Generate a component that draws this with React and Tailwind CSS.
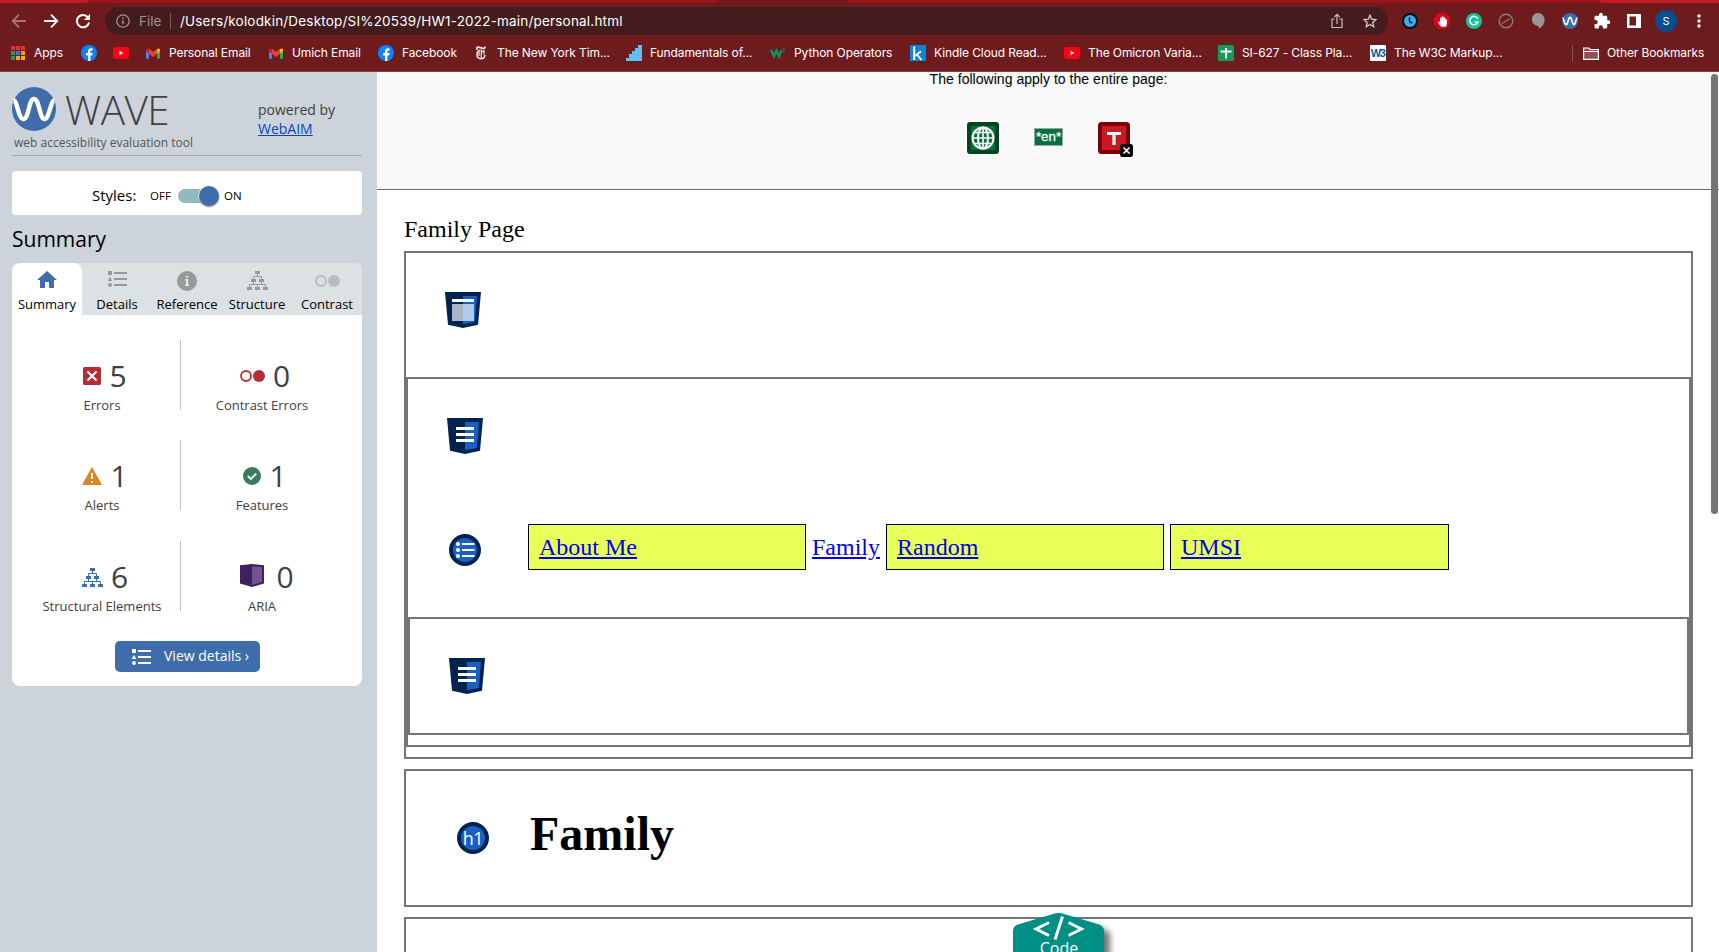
import React from "react";
import { FaHandPaper } from "react-icons/fa";
import { MdExtension } from "react-icons/md";

const ui = "font-['Inter','Liberation_Sans',sans-serif]";

function Gmail() {
  return (
    <svg className="w-[14px] h-[11px]" viewBox="0 0 14 11">
      <path d="M0 1.8V10q0 .8.8.8H3V4z" fill="#4285f4" />
      <path d="M14 1.8V10q0 .8-.8.8H11V4z" fill="#34a853" />
      <path d="M11 1l2-.6q1 .3 1 1.4v1.4L11 5.8z" fill="#fbbc04" />
      <path d="M3 1L1 .4Q0 .7 0 1.8v1.4l3 2.6z" fill="#c5221f" />
      <path d="M3 .8l4 3.3L11 .8v5L7 9 3 5.8z" fill="#ea4335" />
    </svg>
  );
}
function Facebook() {
  return (
    <svg className="w-4 h-4" viewBox="0 0 16 16">
      <circle cx="8" cy="8" r="8" fill="#0a84f8" />
      <path d="M7 16v-5.600H5V8h2V6.500C7 4.400 8.200 3.300 10 3.300l1.600.2v2h-1c-.9 0-1.200.5-1.200 1.200V8h2.200l-.4 2.400H9.400V16z" fill="#fff" />
    </svg>
  );
}
function Youtube() {
  return (
    <svg className="w-4 h-3" viewBox="0 0 16 12">
      <rect width="16" height="12" rx="3" fill="#ff0014" />
      <path d="M6.500 3.700v4.600L10.400 6z" fill="#fff" />
    </svg>
  );
}
function AppsGrid() {
  const colors = ["#f4282d", "#f4282d", "#f4282d", "#1f9a57", "#2a7df0", "#f7981d", "#1f9a57", "#f7a81d", "#f7a81d"];
  return (
    <svg className="w-[14px] h-[14px]" viewBox="0 0 14 14">
      {colors.map((c, i) => (
        <rect key={i} x={(i % 3) * 5} y={Math.floor(i / 3) * 5} width="4" height="4" fill={c} />
      ))}
    </svg>
  );
}
function Steps() {
  return (
    <svg className="w-4 h-4" viewBox="0 0 16 16">
      <path d="M0 16v-3h3v-4h3V6h3V3h3V0h4v16z" fill="#5bc2f2" />
    </svg>
  );
}
function Schools() {
  return (
    <svg className="w-[17px] h-3" viewBox="0 0 17 12">
      <path d="M1 2.500L4.200 9.500 7 3.500 9.600 9.500 12 3" fill="none" stroke="#0c9462" strokeWidth="2.600" />
      <path d="M13 1h2.500L14.300 2.400q1.500.3.800 1.600-.6.800-1.900.3" fill="none" stroke="#0c9462" strokeWidth=".8" />
    </svg>
  );
}
function Kindle() {
  return (
    <svg className="w-4 h-4" viewBox="0 0 16 16">
      <rect width="16" height="16" fill="#0b84dd" />
      <path d="M4.200 1.500V15M11 6.300L5 11M7 9.500L11.500 15" stroke="#fff" strokeWidth="1.900" fill="none" />
    </svg>
  );
}
function Sheet() {
  return (
    <svg className="w-4 h-4" viewBox="0 0 16 16">
      <rect width="16" height="16" rx="1.500" fill="#0f9d58" />
      <path d="M8 3v10.500M2.500 6.500h11" stroke="#fff" strokeWidth="2" />
    </svg>
  );
}
function Nyt() {
  return (
    <svg className="w-[10px] h-[14px]" viewBox="0 0 10 14" fill="none" stroke="#f4e8e8">
      <path d="M1.300 3.800Q-.2 1 2.500 1.200L7 2.300Q9 2.600 9 .6" strokeWidth="1.700" />
      <path d="M4.300 4.300Q1 5 1 8.500q0 4 4 4.300 3.500 0 4-4" strokeWidth="1.500" />
      <path d="M5.300 3.500v8.500M3 5.500v4.500M5.500 6.300l3-2M8 4.500v4" strokeWidth="1.200" />
    </svg>
  );
}
function W3() {
  return (
    <span className="flex justify-center w-4 h-4 pr-[1px] bg-white rounded-[1px] text-[#0a5a9c] font-['Liberation_Sans_Narrow','Liberation_Sans',sans-serif] font-bold text-[11px] leading-[17px] tracking-[-1.500px]">
      W3
    </span>
  );
}

const bookmarks = [
  { w: "w-[70px]", icon: <AppsGrid />, text: "Apps" },
  { w: "w-[32px]", icon: <Facebook /> },
  { w: "w-[32px]", icon: <Youtube /> },
  { w: "w-[123px]", icon: <Gmail />, text: "Personal Email" },
  { w: "w-[110px]", icon: <Gmail />, text: "Umich Email" },
  { w: "w-[95px]", icon: <Facebook />, text: "Facebook" },
  { w: "w-[153px]", icon: <Nyt />, text: "The New York Tim..." },
  { w: "w-[144px]", icon: <Steps />, text: "Fundamentals of..." },
  { w: "w-[140px]", icon: <Schools />, text: "Python Operators" },
  { w: "w-[154px]", icon: <Kindle />, text: "Kindle Cloud Read..." },
  { w: "w-[154px]", icon: <Youtube />, text: "The Omicron Varia..." },
  { w: "w-[152px]", icon: <Sheet />, text: "SI-627 - Class Pla..." },
  { w: "w-[150px]", icon: <W3 />, text: "The W3C Markup..." },
];

function Browser() {
  return (
    <header className={`${ui} h-[72px] bg-[#6e1b1e] border-b border-[#8c3c3d] text-white`}>
      <div className="flex h-[3px]">
        <div className="w-[718px] bg-[#9b141b] rounded-br-[4px]">
          <div className="w-[88px] h-[3px] bg-[#c41c23] rounded-br-[4px]" />
        </div>
        <div className="w-[130px]" />
        <div className="flex-1 flex justify-end bg-[#9b141b] rounded-bl-[4px]">
          <div className="w-[119px] bg-[#c41c23] rounded-bl-[4px]" />
        </div>
      </div>
      <div className="flex items-center h-9">
        <svg className="w-[105px] h-9 shrink-0" viewBox="0 3 105 36" fill="none" strokeWidth="1.800">
          <path d="M26 21H13M19 14.700L12.700 21l6.300 6.300" stroke="#a87577" />
          <path d="M44 21h13M51 14.700l6.300 6.300-6.300 6.300" stroke="#fff" />
          <path d="M88.200 17.600a6.200 6.200 0 1 0 .9 5" stroke="#fff" strokeWidth="2" />
          <path d="M90 14v6h-6z" fill="#fff" />
        </svg>
        <div className="flex items-center w-[1283px] h-7 rounded-full bg-[#441c1e] text-[13.500px]">
          <svg className="ml-[11px] w-[14px] h-[14px]" viewBox="0 0 14 14">
            <circle cx="7" cy="7" r="6.200" fill="none" stroke="#a29293" strokeWidth="1.300" />
            <path d="M7 6.200v4M7 3.500v1.500" stroke="#a29293" strokeWidth="1.500" />
          </svg>
          <span className="ml-[9px] w-[31px] text-[#a29293]">File</span>
          <span className="w-px h-4 bg-[#7c5d5e]" />
          <span className="ml-[9px] flex-1 whitespace-nowrap text-[13.500px] tracking-[0.190px]">/Users/kolodkin/Desktop/SI%20539/HW1-2022-main/personal.html</span>
          <svg className="w-3 h-4 mr-[20px]" viewBox="0 0 12 16" fill="none" stroke="#c9bbbb" strokeWidth="1.200">
            <path d="M3.500 6H1v8.500h10V6H8.500M6 11V1.500M3.300 4L6 1.300 8.700 4" />
          </svg>
          <svg className="w-[14px] h-[14px] mr-[11px]" viewBox="0 0 14 14" fill="none" stroke="#d6caca" strokeWidth="1.300">
            <path d="M7 1.200l1.700 4 4.300.4-3.200 2.900.9 4.200L7 10.500l-3.700 2.200.9-4.200L1 5.600l4.300-.4z" />
          </svg>
        </div>
        <div className="flex items-center ml-[14px] gap-[16px]">
          <svg className="w-4 h-4" viewBox="0 0 16 16">
            <circle cx="8" cy="8" r="8" fill="#0b0f14" />
            <circle cx="8" cy="8" r="6" fill="#35aef0" />
            <path d="M7.500 4.500v4l2.800 1.700" stroke="#0b0f14" strokeWidth="1.500" fill="none" />
          </svg>
          <span className="flex items-center justify-center w-4 h-4 bg-[#e2001a] [clip-path:polygon(30%_0,70%_0,100%_30%,100%_70%,70%_100%,30%_100%,0_70%,0_30%)]">
            <FaHandPaper className="w-[9px] h-[11px]" />
          </span>
          <svg className="w-4 h-4" viewBox="0 0 16 16">
            <circle cx="8" cy="8" r="8" fill="#15c39a" />
            <path d="M11.800 5.700A4.200 4.200 0 1 0 12 9H8.600" fill="none" stroke="#fff" strokeWidth="1.500" />
          </svg>
          <svg className="w-4 h-4" viewBox="0 0 16 16" fill="none" stroke="#8b7878" strokeWidth="1.400">
            <circle cx="8" cy="8" r="6.800" />
            <path d="M4 10.500l8-5" />
          </svg>
          <svg className="w-4 h-4" viewBox="0 0 16 16">
            <path d="M8 0a6.600 6.600 0 0 1 6.600 6.600c0 4.400-2.600 7.600-6 9.200V13A6.500 6.500 0 1 1 8 0z" fill="#979797" />
          </svg>
          <WaveLogo className="w-4 h-4" />
          <MdExtension className="w-[18px] h-[18px] -mx-px" />
          <svg className="w-[14px] h-[14px] mx-px" viewBox="0 0 14 14">
            <path fillRule="evenodd" d="M0 0h14v14H0zM2.500 2.500v9H9v-9z" fill="#fff" />
          </svg>
          <span className="w-[22px] h-[22px] -ml-[3px] rounded-full bg-[#044e91] text-center text-[11px] leading-[22px]">S</span>
        </div>
        <svg className="w-1 h-[14px] ml-5" viewBox="0 0 4 14" fill="#fff">
          <circle cx="2" cy="2" r="1.700" />
          <circle cx="2" cy="7" r="1.700" />
          <circle cx="2" cy="12" r="1.700" />
        </svg>
      </div>
      <nav className="flex items-center h-7 pl-[11px] text-[12px] tracking-[-0.1px] whitespace-nowrap">
        {bookmarks.map((b, i) => (
          <div key={i} className={`${b.w} flex items-center shrink-0 gap-2`}>
            <span className={i === 0 ? "flex w-4 -ml-px pl-px" : "flex w-4 justify-center"}>{b.icon}</span>
            {b.text && <span>{b.text}</span>}
          </div>
        ))}
        <span className="w-px h-4 ml-[52px] bg-[#915253]" />
        <svg className="ml-[10px] w-4 h-[13px]" viewBox="0 0 16 13">
          <path d="M.6 11.500V1h5.200l1.500 1.500h8.100v9.900H.6zM.6 4.500h14.800" fill="#8d5153" stroke="#fff" strokeWidth="1.200" />
        </svg>
        <span className="ml-2">Other Bookmarks</span>
      </nav>
    </header>
  );
}

function WaveLogo({ className }) {
  return (
    <svg className={className} viewBox="0 0 44 44">
      <circle cx="22" cy="22" r="22" fill="#3f6caa" />
      <path d="M1.500 13.500C5.500 13 6 32 11.500 32S16.500 12 22 12s5.500 20 10.500 20S38.500 13 42.500 13.500" fill="none" stroke="#fff" strokeWidth="4.400" />
    </svg>
  );
}

function ListIcon({ className }) {
  return (
    <svg className={className} viewBox="0 0 19 16" fill="currentColor">
      <path d="M0 0h4v4H0zM2 5.700l2.200 4.200H-.2z" />
      <circle cx="2" cy="14" r="1.900" />
      <path d="M6 1h13v2H6zM6 7h13v2H6zM6 13h13v2H6z" />
    </svg>
  );
}
function TreeIcon({ className }) {
  return (
    <svg className={className} viewBox="0 0 21 19">
      <path d="M10.500 2v4M6.500 9V5.500h8V9M2.500 17v-3.500h16V17M6.500 9v4.500M14.500 9v4.500M10.500 13.500V17" fill="none" stroke="currentColor" />
      <path d="M8 0h5v3H8zM4 8h5v3H4zM12 8h5v3h-5zM0 16h5v3H0zM8 16h5v3H8zM16 16h5v3h-5z" fill="currentColor" />
    </svg>
  );
}
function Dots({ className }) {
  return (
    <svg className={className} viewBox="0 0 25 12">
      <circle cx="6" cy="6" r="5" fill="none" stroke="currentColor" strokeWidth="1.800" />
      <circle cx="19" cy="6" r="6" fill="currentColor" />
    </svg>
  );
}

const tabs = [
  {
    label: "Summary",
    icon: (
      <svg className="w-5 h-[17px] mb-[2px] text-[#3f6caa]" viewBox="0 0 20 17" fill="currentColor">
        <path d="M10 0L20 9h-3v8h-5v-6H8v6H3V9H0z" />
      </svg>
    ),
  },
  { label: "Details", icon: <ListIcon className="w-[19px] h-4 text-[#97999b] mb-[3px]" /> },
  {
    label: "Reference",
    icon: (
      <svg className="w-5 h-5" viewBox="0 0 20 20">
        <circle cx="10" cy="10" r="10" fill="#97999b" />
        <path d="M8 8h3.200v5.500h.8V15H8v-1.500h1v-4H8zM9 4.700h2.200v2H9z" fill="#e4e8ea" />
      </svg>
    ),
  },
  { label: "Structure", icon: <TreeIcon className="w-[21px] h-[19px] text-[#97999b]" /> },
  { label: "Contrast", icon: <Dots className="w-[25px] h-3 text-[#b8bcbe]" /> },
];

const stats = [
  {
    n: 5,
    label: "Errors",
    icon: (
      <svg className="w-[18px] h-[18px] mr-2" viewBox="0 0 18 18">
        <rect width="18" height="18" rx="1.500" fill="#b52e35" />
        <path d="M4.500 4.500l9 9M13.500 4.500l-9 9" stroke="#fff" strokeWidth="2" />
      </svg>
    ),
  },
  { n: 0, label: "Contrast Errors", icon: <Dots className="w-[25px] h-3 mr-2 text-[#b52e35]" /> },
  {
    n: 1,
    label: "Alerts",
    icon: (
      <svg className="w-5 h-[18px] mr-2" viewBox="0 0 20 18">
        <path d="M10 0l10 18H0z" fill="#e08327" />
        <path d="M10 6v6M10 14v2" stroke="#fff" strokeWidth="2" />
      </svg>
    ),
  },
  {
    n: 1,
    label: "Features",
    icon: (
      <svg className="w-[18px] h-[18px] mr-2" viewBox="0 0 18 18">
        <circle cx="9" cy="9" r="9" fill="#3a7c5e" />
        <path d="M4.800 9l3 2.900 5.500-5.300" stroke="#fff" strokeWidth="1.800" fill="none" />
      </svg>
    ),
  },
  { n: 6, label: "Structural Elements", icon: <TreeIcon className="w-[21px] h-[19px] mr-2" /> },
  {
    n: 0,
    label: "ARIA",
    icon: (
      <svg className="w-6 h-[23px] mr-3 mb-[3px]" viewBox="0 0 24 23">
        <path d="M0 1.300L12 0l12 1.300V19.500L12 23 0 19.500z" fill="#3f2060" />
        <path d="M12 2.400l10 .7V18l-10 3z" fill="#75528f" />
      </svg>
    ),
  },
];

function Sidebar() {
  return (
    <aside className="w-[377px] shrink-0 h-full pl-3 pr-[15px] bg-[#ccd3da] font-['Open_Sans',sans-serif] text-[#404040]">
      <div className="flex h-[84px] w-[350px] border-b border-[#a2a9af]">
        <div className="w-[246px] pt-[15px]">
          <div className="flex items-center h-11">
            <WaveLogo className="w-11 h-11" />
            <span className="ml-[9px] pt-[2px] font-light text-[40.500px] leading-[40px] tracking-[-0.500px]">WAVE</span>
          </div>
          <div className="mt-[4px] ml-[2px] text-[12px] leading-4 whitespace-nowrap text-[#555]">web accessibility evaluation tool</div>
        </div>
        <div className="pt-[28px] text-[14px] leading-[19px]">
          <div>powered by</div>
          <a className="underline text-[#0645c0]">WebAIM</a>
        </div>
      </div>
      <div className="flex items-center w-[350px] h-11 mt-[15px] pt-[5px] rounded bg-white text-black">
        <span className="ml-[80px] w-[58px] text-[15px]">Styles:</span>
        <span className="w-[28px] text-[11.500px]">OFF</span>
        <span className="flex justify-end items-center w-10 h-[14px] rounded-full bg-[#92b8c0]">
          <span className="w-5 h-5 shrink-0 -mr-px rounded-full bg-[#3f6caa] shadow-[0_1px_2px_rgba(0,0,0,0.5),-1px_0_0_#fff]" />
        </span>
        <span className="ml-[6px] text-[11.500px]">ON</span>
      </div>
      <h2 className="h-12 pt-[8px] text-[21px] leading-[32px] text-black">Summary</h2>
      <div className="w-[350px] h-[423px] rounded-lg overflow-hidden bg-white">
        <div className="flex h-[52px] bg-[#dce1e3] text-black">
          {tabs.map((t, i) => (
            <div key={t.label} className={`w-[70px] flex flex-col items-center ${i === 0 ? "bg-white rounded-t-lg" : ""}`}>
              <span className="flex items-center h-[35px]">{t.icon}</span>
              <span className="text-[13px] leading-[13px]">{t.label}</span>
            </div>
          ))}
        </div>
        <div className="grid grid-cols-[169px_1fr] grid-rows-[100px_101px_100px] pt-[25px]">
          {stats.map((s, i) => (
            <div key={s.label} className={`h-[70px] flex flex-col items-center ${i % 2 === 0 ? "pr-[13px] pl-[25px] border-r border-[#c0c0c0]" : "pr-[19px]"}`}>
              <div className={`flex items-center h-[53px] pt-[19px] text-[30px] ${i === 5 ? "pl-[10px]" : "pl-[6px]"}`}>
                <span className="text-[#3f6caa]">{s.icon}</span>
                <span className="leading-[34px]">{s.n}</span>
              </div>
              <span className="text-[13px] leading-4 whitespace-nowrap mt-[4px]">{s.label}</span>
            </div>
          ))}
        </div>
        <button className="flex items-center w-[145px] h-[31px] ml-[103px] rounded-[5px] bg-[#3f6caa] text-white text-[14px] whitespace-nowrap">
          <ListIcon className="w-[19px] h-4 ml-[17px] mr-[13px]" />
          <span className="pb-[2px]">View details ›</span>
        </button>
      </div>
    </aside>
  );
}

function Shield({ children, className }) {
  return (
    <svg className={`w-9 h-9 ${className}`} viewBox="0 0 36 36">
      <path d="M0 0h36l-3 32.800L18 36 3 32.800z" fill="#02234f" />
      <path d="M18 4h14l-2.200 26L18 32.300z" fill="#1760c4" />
      {children}
    </svg>
  );
}
function NavShield({ className }) {
  return (
    <Shield className={className}>
      <path d="M9 9h18v3H9zM9 15h18v3H9zM9 21h18v3H9z" fill="#fff" />
    </Shield>
  );
}

function PageHeader() {
  return (
    <div className="flow-root h-[118px] bg-[#f8f8f8] border-b border-[#6c6e6c] text-black">
      <p className="font-['Liberation_Sans',sans-serif] text-[14px] leading-4 text-center -mt-px pl-px tracking-[0.030px]">The following apply to the entire page:</p>
      <div className="flex items-start pl-[588px] pt-[33px]">
        <svg className="w-9 h-9" viewBox="0 0 36 36">
          <rect width="36" height="36" rx="6" fill="#fff" />
          <rect x="4" y="4" width="28" height="28" rx="1" fill="#05713f" stroke="#02451f" strokeWidth="4" strokeLinejoin="round" />
          <g fill="none" stroke="#fff" strokeWidth="2">
            <circle cx="18" cy="18" r="10.500" />
            <ellipse cx="18" cy="18" rx="5" ry="10.500" />
            <path d="M18 7.500v21M7.500 18h21M9 12.500h18M9 23.500h18" strokeWidth="1.600" />
          </g>
        </svg>
        <span className="w-[29px] h-[18px] mt-2 ml-[33px] border border-[#9aa79f] bg-[#05713f] font-['Liberation_Sans',sans-serif] text-white text-[13.300px] leading-[16px] flex justify-center [-webkit-text-stroke:0.3px_white]">*en*</span>
        <svg className="w-[38px] h-[38px] ml-[33px]" viewBox="0 0 38 38">
          <rect width="36" height="36" rx="6" fill="#fff" />
          <rect x="4" y="4" width="28" height="28" rx="1.500" fill="#cd1722" stroke="#7c0006" strokeWidth="4" strokeLinejoin="round" />
          <path d="M11 13.500h14M18 13.500V25" stroke="#fff" strokeWidth="3.200" />
          <rect x="24" y="24" width="13" height="13" rx="2.500" fill="#000" />
          <path d="M27.500 27.500l6 6M33.500 27.500l-6 6" stroke="#fff" strokeWidth="1.700" />
        </svg>
      </div>
    </div>
  );
}

function LinkBox({ children, wide }) {
  return (
    <li className={`${wide ? "w-[279px]" : "w-[278px]"} h-[46px] pl-[10px] border border-black bg-[#e7ff58] leading-[45px]`}>
      <a className="underline">{children}</a>
    </li>
  );
}

function Page() {
  return (
    <main className="relative flex-1 h-full overflow-hidden bg-white font-['Liberation_Serif','Times_New_Roman',serif] text-[24px] text-black">
      <PageHeader />
      <div className="pl-[27px] pr-[26px]">
        <p className="h-[61px] pt-[25px] leading-[28px]">Family Page</p>
        <header className="h-[508px] border-2 border-[#757575]">
          <div className="h-[124px] pt-[39px]"><Shield className="ml-[39px]">
            <path d="M7 7h22v3H7z" fill="#fff" />
            <path d="M7 12h22v17H7z" fill="#fff" fillOpacity=".67" />
          </Shield></div>
          <nav className="h-[370px] border-2 border-[#757575]">
            <div className="h-[145px] pt-[39px]"><NavShield className="ml-[39px]" /></div>
            <div className="flex h-[93px] pl-[41px]">
              <svg className="w-8 h-8 mt-[10px] mr-[47px]" viewBox="0 0 32 32">
                <circle cx="16" cy="16" r="14" fill="#1760c4" stroke="#02234f" strokeWidth="4" />
                <path d="M13 9h12.500v2H13zM13 15h12.500v2H13zM13 21h12.500v2H13z" fill="#fff" />
                <circle cx="9" cy="10" r="2" fill="#fff" />
                <circle cx="9" cy="16" r="2" fill="#fff" />
                <circle cx="9" cy="22" r="2" fill="#fff" />
              </svg>
              <ul className="flex text-[#0000ee]">
                <LinkBox>About Me</LinkBox>
                <li className="w-[80px] text-center leading-[47px]"><a className="underline">Family</a></li>
                <LinkBox>Random</LinkBox>
                <li className="w-[6px]" />
                <LinkBox wide>UMSI</LinkBox>
              </ul>
            </div>
            <section className="h-[118px] pt-[39px] border-2 border-[#757575]"><NavShield className="ml-[39px]" /></section>
          </nav>
        </header>
        <section className="flex items-center h-[138px] mt-[10px] pl-[51px] border-2 border-[#757575]">
          <svg className="w-8 h-8" viewBox="0 0 32 32">
            <circle cx="16" cy="16" r="14" fill="#1760c4" stroke="#02234f" strokeWidth="4" />
            <text x="16" y="22.700" textAnchor="middle" className="font-['Open_Sans',sans-serif] text-[18px] tracking-[-0.5px]" fill="#fff">h1</text>
          </svg>
          <h1 className="ml-[41px] pb-[9px] text-[48px] leading-[52px] font-bold">Family</h1>
        </section>
        <section className="h-[60px] mt-[10px] border-2 border-[#757575]" />
      </div>
      <div className="absolute left-[1334px] top-[2px] w-[7px] h-[440px] rounded-full bg-[#757575]" />
      <svg className="absolute left-[636px] top-[840px] w-[104px] h-[42px]" viewBox="0 0 104 42">
        <defs>
          <filter id="soft" x="-20%" y="-20%" width="140%" height="160%"><feGaussianBlur stdDeviation="3" /></filter>
        </defs>
        <path d="M6 22Q6 19 10 17L51 6 90 17Q97 19 97 23V52H6z" fill="#000" opacity=".55" filter="url(#soft)" />
        <path d="M0 19Q0 14 5 12.500L40 2Q45.500 0 51 2L86 12.500Q91 14 91 19V42H0z" fill="#008f85" />
        <path d="M36 10.500L23 17l13 6.500M55.500 10.500L68.500 17l-13 6.500M49.500 4.500L42 27.500" fill="none" stroke="#fff" strokeWidth="3" />
        <text x="46" y="41.500" textAnchor="middle" fill="#fff" className="font-['Open_Sans',sans-serif] text-[16px]">Code</text>
      </svg>
    </main>
  );
}

export default function App() {
  return (
    <div className="w-[1719px] h-[952px] overflow-hidden flex flex-col">
      <Browser />
      <div className="flex h-[880px]">
        <Sidebar />
        <Page />
      </div>
    </div>
  );
}
